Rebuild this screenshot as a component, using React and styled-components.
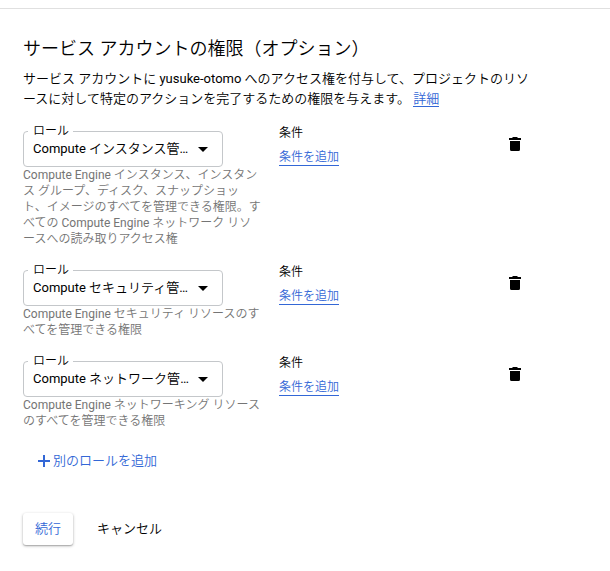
import React, { useState } from "react";
import styled, { createGlobalStyle } from "styled-components";

const GlobalStyle = createGlobalStyle`
  * {
    box-sizing: border-box;
  }

  body {
    margin: 0;
    background: #fff;
    color: #000;
    font-family: Roboto, "Noto Sans CJK JP DemiLight", "Noto Sans CJK JP", sans-serif;
    font-size: 13px;
    line-height: 20px;
  }

  button,
  select {
    font: inherit;
    color: inherit;
  }
`;

const TopBar = styled.div`
  height: 9px;
  border-bottom: 1px solid #e0e0e0;
`;

const StepBox = styled.form`
  max-width: 558px;
  padding: 28px 23px 24px;
`;

const Title = styled.h2`
  margin: 0 0 8px;
  font-size: 18px;
  font-weight: 400;
  line-height: 24px;
`;

const Description = styled.p`
  margin: 0;
  line-break: normal;
`;

const TextLink = styled.a`
  color: #3367d6;
  text-decoration: none;
  border-bottom: 1px solid #3367d6;
`;

const RoleList = styled.ul`
  display: flex;
  flex-direction: column;
  gap: 23px;
  margin: 22px 0 0;
  padding: 0;
  list-style: none;
`;

const RoleRow = styled.li`
  display: grid;
  grid-template-columns: 240px 1fr 40px;
  column-gap: 16px;
  align-items: start;
`;

const SelectField = styled.div`
  position: relative;
  width: 200px;
  height: 36px;
`;

const SelectLabel = styled.label`
  position: absolute;
  top: -8px;
  left: 5px;
  padding: 0 4px 0 5px;
  background: #fff;
  font-size: 12px;
  line-height: 16px;
`;

const RoleSelect = styled.select`
  width: 100%;
  height: 100%;
  padding: 0 33px 0 9px;
  border: 1px solid #c4c7ca;
  border-radius: 4px;
  background: #fff;
  appearance: none;
  text-overflow: ellipsis;
`;

const SelectArrow = styled.svg`
  position: absolute;
  top: 16px;
  right: 15px;
  pointer-events: none;
`;

const RoleHelp = styled.p`
  margin: 0;
  color: #757575;
  font-size: 12px;
  line-height: 16px;
  line-break: normal;
  white-space: pre-line;
`;

const Condition = styled.div`
  display: flex;
  flex-direction: column;
  align-items: flex-start;
  gap: 8px;
  margin-top: -6px;
  font-size: 12px;
  line-height: 16px;
`;

const DeleteButton = styled.button`
  display: flex;
  justify-content: center;
  padding: 6px 0;
  border: 0;
  background: none;
  cursor: pointer;
`;

const AddButton = styled.button`
  display: flex;
  align-items: center;
  gap: 3px;
  margin-top: 22px;
  padding: 0 15px;
  border: 0;
  background: none;
  color: #3367d6;
  cursor: pointer;
`;

const Actions = styled.div`
  display: flex;
  gap: 12px;
  margin-top: 42px;
`;

const ActionButton = styled.button`
  height: 32px;
  padding: 0 12px;
  border: 0;
  border-radius: 3px;
  background: #fff;
  color: ${(props) => (props.$raised ? "#3367d6" : "#000")};
  box-shadow: ${(props) =>
    props.$raised
      ? "0 1px 3px rgba(0, 0, 0, 0.3), 0 1px 1px rgba(0, 0, 0, 0.14)"
      : "none"};
  cursor: pointer;
`;

const roles = [
  {
    id: "instance",
    name: "Compute インスタンス管理者（v1）",
    help: "Compute Engine インスタンス、インスタンス グループ、ディスク、スナップショッ\nト、イメージのすべてを管理できる権限。すべての Compute Engine ネットワーク リソースへの読み取りアクセス権",
  },
  {
    id: "security",
    name: "Compute セキュリティ管理者",
    help: "Compute Engine セキュリティ リソースのすべてを管理できる権限",
  },
  {
    id: "network",
    name: "Compute ネットワーク管理者",
    help: "Compute Engine ネットワーキング リソースのすべてを管理できる権限",
  },
];

function RoleItem({ role }) {
  const [value, setValue] = useState(role.id);
  const selectId = `role-${role.id}`;

  return (
    <RoleRow>
      <div>
        <SelectField>
          <RoleSelect
            id={selectId}
            value={value}
            onChange={(e) => setValue(e.target.value)}
          >
            {roles.map((a) => (
              <option key={a.id} value={a.id}>
                {a.name}
              </option>
            ))}
          </RoleSelect>
          <SelectLabel htmlFor={selectId}>ロール</SelectLabel>
          <SelectArrow width="10" height="5" viewBox="0 0 10 5">
            <path d="M0 0h10L5 5z" />
          </SelectArrow>
        </SelectField>
        <RoleHelp>{role.help}</RoleHelp>
      </div>
      <Condition>
        <span>条件</span>
        <TextLink href="#condition">条件を追加</TextLink>
      </Condition>
      <DeleteButton type="button" aria-label="削除">
        <svg width="12" height="14" viewBox="0 0 12 14">
          <path d="M4 0h4l1 1h3v2H0V1h3zM1 4h10v8.500a1.500 1.500 0 0 1-1.500 1.500h-7A1.500 1.500 0 0 1 1 12.500z" />
        </svg>
      </DeleteButton>
    </RoleRow>
  );
}

function App() {
  return (
    <div lang="ja">
      <GlobalStyle />
      <TopBar />
      <StepBox onSubmit={(e) => e.preventDefault()}>
        <Title>サービス アカウントの権限（オプション）</Title>
        <Description>
          サービス アカウントに yusuke-otomo
          へのアクセス権を付与して、プロジェクトのリソースに対して特定のアクションを完了するための権限を与えます。{" "}
          <TextLink href="#details">詳細</TextLink>
        </Description>
        <RoleList>
          {roles.map((role) => (
            <RoleItem key={role.id} role={role} />
          ))}
        </RoleList>
        <AddButton type="button">
          <svg width="12" height="12" viewBox="0 0 12 12">
            <path d="M5 0h2v5h5v2H7v5H5V7H0V5h5z" fill="currentColor" />
          </svg>
          別のロールを追加
        </AddButton>
        <Actions>
          <ActionButton type="submit" $raised>
            続行
          </ActionButton>
          <ActionButton type="button">キャンセル</ActionButton>
        </Actions>
      </StepBox>
    </div>
  );
}

export default App;
